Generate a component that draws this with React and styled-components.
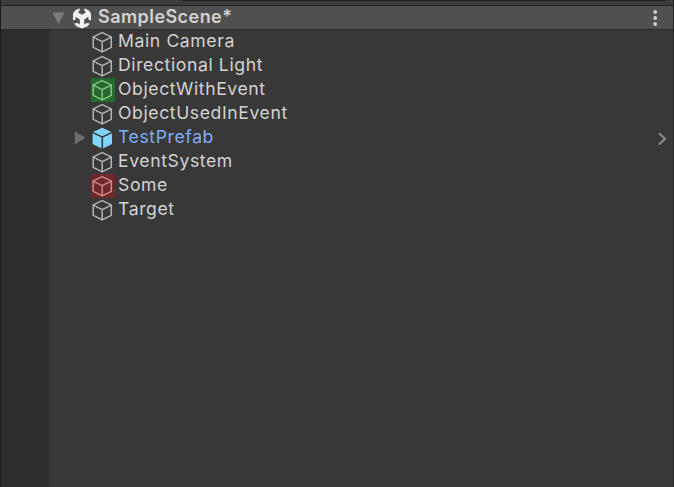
import React from "react";
import styled, { createGlobalStyle } from "styled-components";

const Global = createGlobalStyle`
  *, *::before, *::after { box-sizing: border-box; }
  body { margin: 0; background: #383838; overflow: hidden; }
`;

const Panel = styled.main`
  display: flex;
  flex-direction: column;
  width: 674px;
  height: 487px;
  border-left: 1px solid #1c1c1c;
  border-right: 1px solid #222222;
  background: #383838;
  color: #d2d2d2;
  font: 400 18px/24px Inter, "Liberation Sans", sans-serif;
`;

const TopStrip = styled.div`
  height: 6px;
  flex: none;
  padding: 0 8px 0 182px;
  background: #3c3c3c;
  border-bottom: 1px solid #202020;
`;

const SearchEdge = styled.div`
  height: 1px;
  background: #222222;
`;

const SceneHeader = styled.header`
  display: flex;
  align-items: center;
  flex: none;
  height: 24px;
  padding: 0 15px 0 51px;
  background: #505050;
  border-bottom: 1px solid #2c2c2c;
`;

const FoldGap = styled.span`
  width: 6px;
`;

const SceneName = styled.h1`
  flex: 1;
  margin: 0 0 0 6px;
  padding-bottom: 1px;
  font-size: 18px;
  line-height: 22px;
  font-weight: 600;
  letter-spacing: 0.44px;
`;

const Body = styled.div`
  display: flex;
  flex: 1;
`;

const Gutter = styled.div`
  width: 48px;
  background: #2d2d2d;
`;

const Tree = styled.ul`
  flex: 1;
  margin: 0;
  padding: 0;
  list-style: none;
`;

const Row = styled.li`
  display: flex;
  height: 24px;
  padding: 0 4px 0 24px;
  color: ${(p) => (p.$prefab ? "#7fadf7" : "#d2d2d2")};
`;

const FoldSlot = styled.span`
  width: 18px;
  height: 24px;
  svg { display: block; }
`;

const IconTile = styled.span`
  width: 24px;
  height: 24px;
  background: ${(p) => p.$tint || "transparent"};
  svg { display: block; }
`;

const Label = styled.span`
  flex: 1;
  margin-left: 3px;
  font-size: 17.6px;
  line-height: 22px;
  letter-spacing: 0.6px;
  white-space: nowrap;
`;

const Cube = ({ color }) => (
  <svg width="24" height="24" viewBox="0 0 24 24" fill="none" stroke={color} strokeWidth="1.5" strokeLinejoin="round">
    <path d="M11.2 2.6 20.3 6.9V17.3L11.2 21.9 2.2 17.3V6.9Z" />
    <path d="M2.2 7.1 11.2 11.6 20.3 7.1M11.2 11.6V21.9" />
  </svg>
);

const PrefabCube = () => (
  <svg width="24" height="24" viewBox="0 0 24 24" fill="#7fd6fd">
    <path d="M11.3 1.8 20.4 6 11.3 10.3 2.2 6Z" />
    <path d="M1.6 7.3 10.5 11.6V22.4L1.6 17.9Z" />
    <path d="M21 7.3 12.1 11.6V22.4L21 17.9Z" />
  </svg>
);

const UnityLogo = () => (
  <svg width="20" height="22" viewBox="0 0 20 22" fill="#f1f1f1">
    <path d="M7.6 1.2V3.8L5.8 5.2 10 7.8 14.2 5.2 12.4 3.8V1.2L16.6 3.2 19 6.4V13.4L16.4 12.4V9.8L12.2 12.4V17.4L14.4 16 17.8 16.6 15.6 19.2 10 21.4 4.4 19.2 2.2 16.6 5.6 16 7.8 17.4V12.4L3.6 9.8V12.4L1 13.4V6.4L3.4 3.2Z" />
  </svg>
);

const SceneFold = () => (
  <svg width="14" height="14" viewBox="0 0 14 14">
    <path d="M.5 1.6H12.5L6.5 13.2Z" fill="#7b7b7b" />
  </svg>
);

const RowFold = () => (
  <svg width="18" height="24" viewBox="0 0 18 24">
    <path d="M1.8 5.3 12.6 11.8 1.8 18.6Z" fill="#6c6c6c" />
  </svg>
);

const Chevron = () => (
  <svg width="12" height="24" viewBox="0 0 12 24" fill="none" stroke="#8e8e8e" strokeWidth="2">
    <path d="M2 7.2 8 12.8 2 18.5" />
  </svg>
);

const Kebab = () => (
  <svg width="6" height="18" viewBox="0 0 6 18" fill="#cfcfcf">
    <circle cx="3.2" cy="3" r="1.9" />
    <circle cx="3.2" cy="9" r="1.9" />
    <circle cx="3.2" cy="15" r="1.9" />
  </svg>
);

const objects = [
  { name: "Main Camera" },
  { name: "Directional Light" },
  { name: "ObjectWithEvent", tint: "#28692e", line: "#7fc784" },
  { name: "ObjectUsedInEvent" },
  { name: "TestPrefab", prefab: true },
  { name: "EventSystem" },
  { name: "Some", tint: "#6d2829", line: "#d58787" },
  { name: "Target" },
];

export default function App() {
  return (
    <>
      <Global />
      <Panel>
        <TopStrip><SearchEdge /></TopStrip>
        <SceneHeader>
          <SceneFold />
          <FoldGap />
          <UnityLogo />
          <SceneName>SampleScene*</SceneName>
          <Kebab />
        </SceneHeader>
        <Body>
          <Gutter />
          <Tree>
            {objects.map((o) => (
              <Row key={o.name} $prefab={o.prefab}>
                <FoldSlot>{o.prefab && <RowFold />}</FoldSlot>
                <IconTile $tint={o.tint}>
                  {o.prefab ? <PrefabCube /> : <Cube color={o.line || "#b4b4b4"} />}
                </IconTile>
                <Label>{o.name}</Label>
                {o.prefab && <Chevron />}
              </Row>
            ))}
          </Tree>
        </Body>
      </Panel>
    </>
  );
}
